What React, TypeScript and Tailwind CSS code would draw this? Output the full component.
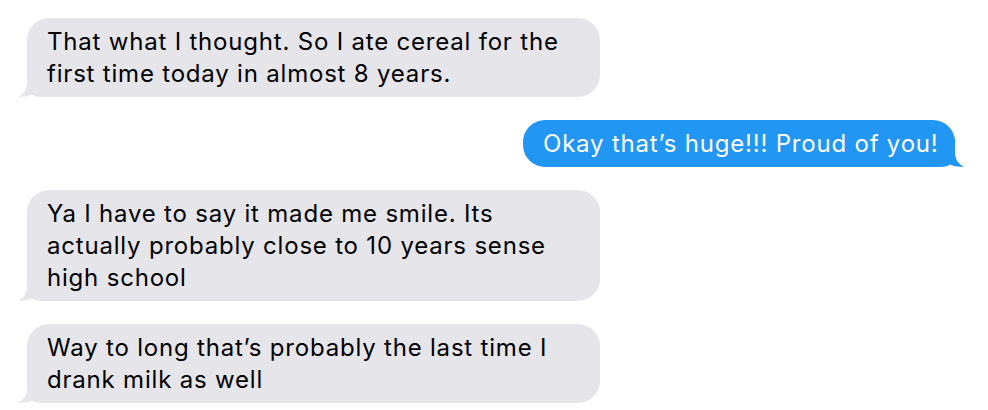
import React from 'react';

type Msg = { id: number; fromMe: boolean; lines: string[] };

const MESSAGES: Msg[] = [
  { id: 1, fromMe: false, lines: ['That what I thought. So I ate cereal for the', 'first time today in almost 8 years.'] },
  { id: 2, fromMe: true, lines: ['Okay that\u2019s huge!!! Proud of you!'] },
  { id: 3, fromMe: false, lines: ['Ya I have to say it made me smile. Its', 'actually probably close to 10 years sense', 'high school'] },
  { id: 4, fromMe: false, lines: ['Way to long that\u2019s probably the last time I', 'drank milk as well'] },
];

const Tail = ({ fromMe }: { fromMe: boolean }) => (
  <svg
    width="30"
    height="28"
    viewBox="0 0 30 28"
    className={`absolute bottom-0 ${fromMe ? 'right-[-9px] scale-x-[-1] fill-[#2196f3]' : 'left-[-9px] fill-[#e5e5ea]'}`}
  >
    <path d="M9 0 H30 V28 H24 C20 28 17 27.4 14 25.6 C10 27.4 5 28 0 28 C5 25 9 21 9 13 Z" />
  </svg>
);

const Bubble = ({ msg }: { msg: Msg }) => (
  <div className={`flex ${msg.fromMe ? 'justify-end' : 'justify-start'}`}>
    <div
      className={`relative rounded-[22px] px-5 pt-[8px] pb-[7px] text-[24px] leading-[32px] tracking-[0.8px] ${
        msg.fromMe ? 'w-[432px] bg-[#2196f3] text-white' : 'w-[573px] bg-[#e5e5ea] text-black'
      }`}
    >
      <Tail fromMe={msg.fromMe} />
      <p className="relative whitespace-nowrap">
        {msg.lines.map((l, i) => (
          <React.Fragment key={i}>
            {l}
            {i < msg.lines.length - 1 && <br />}
          </React.Fragment>
        ))}
      </p>
    </div>
  </div>
);

export default function App() {
  return (
    <div className="w-[988px] h-[410px] overflow-hidden bg-white font-['Inter',sans-serif]">
      <div className="flex flex-col gap-[23px] pt-[18px] pl-[27px] pr-[33px]">
        {MESSAGES.map(m => (
          <Bubble key={m.id} msg={m} />
        ))}
      </div>
    </div>
  );
}
